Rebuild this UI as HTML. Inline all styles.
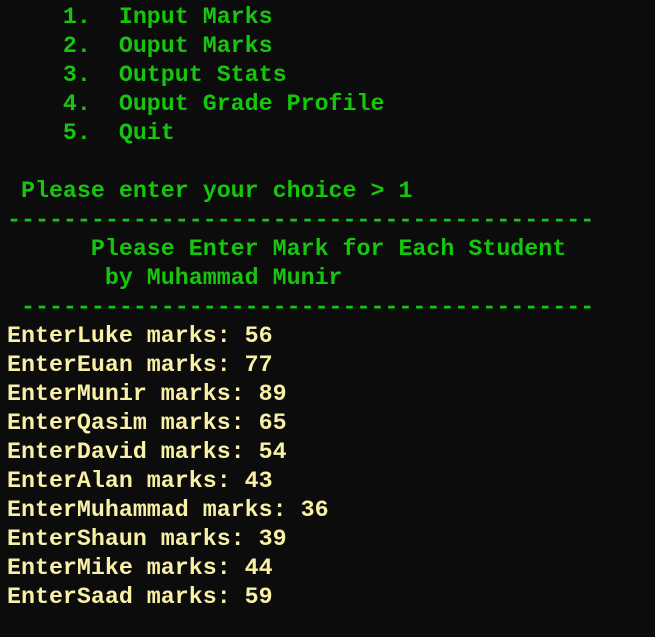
<!DOCTYPE html>
<html><head><meta charset="utf-8"><style>
html,body{margin:0;padding:0;background:#0c0c0c;width:655px;height:637px;overflow:hidden}
pre{margin:0;padding:3px 0 0 7px;font-family:"Liberation Mono",monospace;font-size:23.3px;line-height:29px;font-weight:bold;-webkit-text-stroke:0}
.g{color:#16c60c}.y{color:#f9f1a5}
</style></head><body><pre><span class="g">    1.  Input Marks
    2.  Ouput Marks
    3.  Output Stats
    4.  Ouput Grade Profile
    5.  Quit

 Please enter your choice &gt; 1
------------------------------------------
      Please Enter Mark for Each Student
       by Muhammad Munir
 -----------------------------------------</span>
<span class="y">EnterLuke marks: 56
EnterEuan marks: 77
EnterMunir marks: 89
EnterQasim marks: 65
EnterDavid marks: 54
EnterAlan marks: 43
EnterMuhammad marks: 36
EnterShaun marks: 39
EnterMike marks: 44
EnterSaad marks: 59</span></pre></body></html>
